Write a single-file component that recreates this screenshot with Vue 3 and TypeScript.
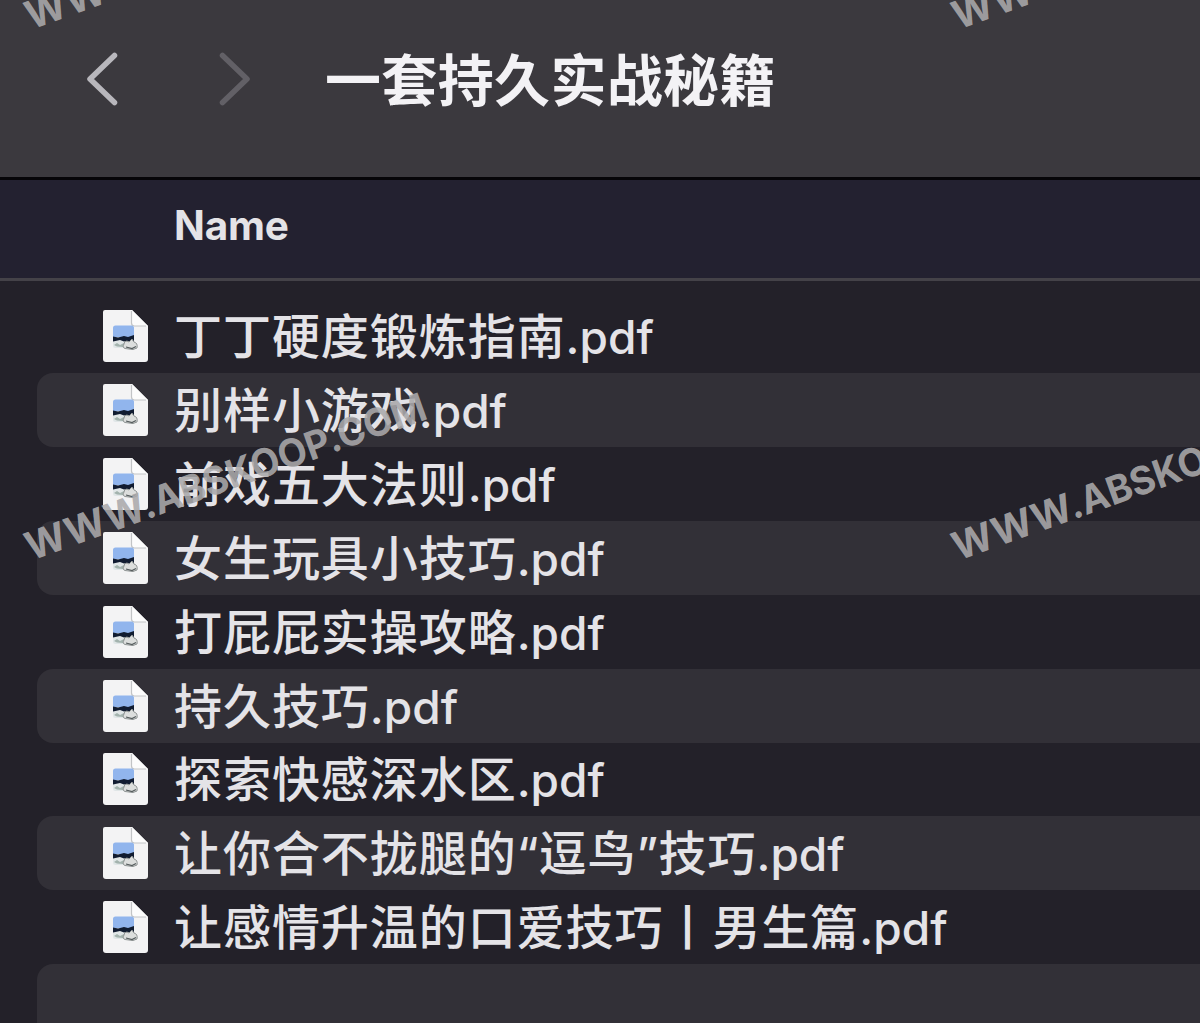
<script setup lang="ts">
interface Part {
  text: string
  latin?: boolean
}

const files: Part[][] = [
  [{ text: '丁丁硬度锻炼指南' }],
  [{ text: '别样小游戏' }],
  [{ text: '前戏五大法则' }],
  [{ text: '女生玩具小技巧' }],
  [{ text: '打屁屁实操攻略' }],
  [{ text: '持久技巧' }],
  [{ text: '探索快感深水区' }],
  [{ text: '让你合不拢腿的' }, { text: '“', latin: true }, { text: '逗鸟' }, { text: '”', latin: true }, { text: '技巧' }],
  [{ text: '让感情升温的口爱技巧丨男生篇' }],
]

const marks = [
  { x: 31, y: 30 },
  { x: 958, y: 30 },
  { x: 31, y: 561 },
  { x: 958, y: 561 },
]
</script>

<template>
  <main class="window">
    <header class="toolbar">
      <svg class="chevron" viewBox="0 0 32 56" aria-label="Back"><path d="M28.500 4.500 4 28l24.500 23.500" /></svg>
      <svg class="chevron forward" viewBox="0 0 32 56" aria-label="Forward"><path d="M3.500 4.500 28 28 3.500 51.500" /></svg>
      <h1>一套持久实战秘籍</h1>
    </header>
    <div class="columns">Name</div>
    <ul class="list">
      <li v-for="(file, i) in files" :key="i" class="row">
        <svg class="doc" viewBox="0 0 46 54">
          <path d="M3 1h27l16 16v33q0 3-3 3H4q-3 0-3-3V3q0-2 2-2z" fill="#f3f3f4" />
          <path d="M30 1l16 16H32q-3 0-3-3z" fill="#fcfcfc" />
          <path d="M29.500 2v12q0 3 3 3H44" fill="none" stroke="#c2c4c6" stroke-width="1.2" />
          <rect x="11" y="17" width="21" height="22" rx="2.5" fill="#e0e6e7" />
          <path d="M11 28v-9q0-2.500 2.500-2.500h16q2.500 0 2.500 2.500v9z" fill="#91b5ed" />
          <path d="M11 27.500l5 1 6-1.500 4 1 6-2v6l-10 .5-4-1.500-7 1.500z" fill="#111c31" />
          <path d="M12 36l3-2 3 2 4-2 3 2-4 2-6-.5z" fill="#a3b3ae" />
          <path d="M22 35q0-3 3-3l2 1 3-3 2 3q4 1 3 6l-4 1.500-8-1q-3-1-1-4.500z" fill="#dcdedd" stroke="#8e9393" />
          <path d="M24 38l6 1.500 4-2" fill="none" stroke="#555c5d" stroke-width="1.2" />
        </svg>
        <span class="name">
          <span v-for="(part, j) in file" :key="j" :class="part.latin ? 'quote' : 'han'">{{ part.text }}</span><span class="ext">.pdf</span>
        </span>
      </li>
      <li class="row"></li>
    </ul>
    <svg class="watermark" viewBox="0 0 1200 1023">
      <g v-for="(m, i) in marks" :key="i" :transform="`translate(${m.x} ${m.y}) rotate(-19.7)`">
        <text textLength="125" lengthAdjust="spacingAndGlyphs">WWW</text>
        <text x="123" textLength="300" lengthAdjust="spacingAndGlyphs">.ABSKOOP.COM</text>
      </g>
    </svg>
  </main>
</template>

<style>
body {
  margin: 0;
  background: #232129;
}
</style>

<style scoped>
.window {
  position: relative;
  height: 1023px;
  overflow: hidden;
  background: #232129;
  color: #e4e3e7;
  font-family: Inter, "Noto Sans CJK SC", sans-serif;
}
.toolbar {
  display: flex;
  align-items: center;
  box-sizing: border-box;
  height: 180px;
  padding: 0 0 20px 86px;
  background: #3b393e;
  border-bottom: 3px solid #060508;
}
.chevron {
  width: 32px;
  height: 56px;
  fill: none;
  stroke: #b8b7bc;
  stroke-width: 5.5;
  stroke-linecap: round;
  stroke-linejoin: round;
}
.forward {
  margin-left: 101px;
  stroke: #626066;
}
h1 {
  margin: 0 0 4px 74px;
  font: 700 56px/80px "Noto Sans CJK SC", sans-serif;
  letter-spacing: 0.35px;
  color: #f3f2f5;
  white-space: nowrap;
}
.columns {
  box-sizing: border-box;
  height: 101px;
  padding-left: 174px;
  border-bottom: 3px solid #444248;
  background: #232130;
  font-size: 40.5px;
  font-weight: 700;
  letter-spacing: -0.2px;
  line-height: 91px;
}
.list {
  margin: 0;
  padding: 18.5px 0 0 37px;
  list-style: none;
}
.row {
  display: flex;
  align-items: center;
  box-sizing: border-box;
  height: 73.85px;
  padding-left: 65px;
  border-radius: 16px 0 0 16px;
}
.row:nth-child(even) {
  background: #323037;
}
.doc {
  flex: none;
  width: 46px;
  height: 54px;
}
.name {
  display: flex;
  align-items: baseline;
  margin: 0 0 2px 26px;
  line-height: 70px;
  white-space: nowrap;
}
.han {
  font-family: "Noto Sans CJK SC", sans-serif;
  font-size: 48px;
  font-weight: 500;
  letter-spacing: 0.95px;
}
.quote {
  width: 22px;
  font-size: 46px;
  font-weight: 500;
}
.ext {
  font-size: 46px;
  font-weight: 500;
}
.watermark {
  position: absolute;
  inset: 0;
  width: 1200px;
  height: 1023px;
  fill: #aaa9ab;
  fill-opacity: 0.9;
  font-size: 39px;
  font-weight: 700;
}
</style>
